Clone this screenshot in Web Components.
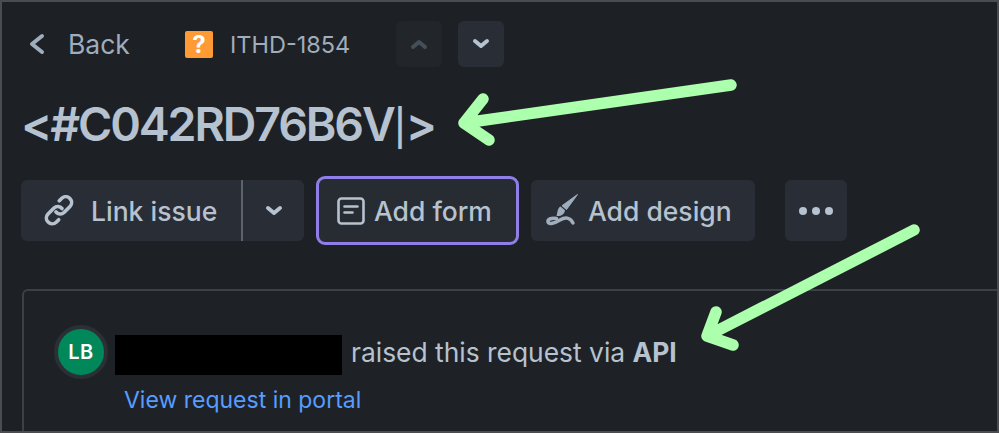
<!DOCTYPE html>
<html>
<head>
<meta charset="utf-8">
<style>
  html, body { margin: 0; padding: 0; background: #1d2125; }
</style>
</head>
<body>
<issue-screen>
  <issue-nav></issue-nav>
  <issue-title>&lt;#C042RD76B6V<span>|</span>&gt;</issue-title>
  <issue-actions></issue-actions>
  <request-card></request-card>
</issue-screen>

<script>
/* Outer screen frame, the annotation arrows lie over it */
class IssueScreen extends HTMLElement {
  constructor() {
    super();
    this.attachShadow({ mode: 'open' });
    this.shadowRoot.innerHTML = `
      <style>
        :host {
          display: block;
          position: relative;
          width: 999px;
          height: 433px;
          box-sizing: border-box;
          overflow: hidden;
          background: #1d2125;
          border: 2px solid #4b4c4f;
          font-family: Inter, "Liberation Sans", sans-serif;
          color: #b6c2cf;
        }
        .arrows { position: absolute; left: -2px; top: -2px; pointer-events: none; }
      </style>
      <slot></slot>
      <svg class="arrows" width="999" height="433" fill="none" stroke="#acffac" stroke-width="11.500" stroke-linecap="round" stroke-linejoin="round">
        <path d="M731 85L464 123M483 99L464 123L489 140"/>
        <path d="M914 230L707 336M716 312L707 336L733 345"/>
      </svg>
    `;
  }
}

class IssueNav extends HTMLElement {
  constructor() {
    super();
    this.attachShadow({ mode: 'open' });
    this.shadowRoot.innerHTML = `
      <style>
        :host { display: flex; align-items: center; height: 46px; margin-top: 19px; padding-left: 26px; }
        .back { display: flex; align-items: center; gap: 23px; font-size: 26.500px; color: #9fadbc; width: 157px; }
        .back svg { display: block; }
        .type {
          width: 28px; height: 27px; border-radius: 2px; background: #ff9a35; color: #fff;
          font: 700 24px/27px Inter, sans-serif; text-align: center;
        }
        .key { font-size: 23.500px; color: #9fadbc; margin-left: 17px; width: 166px; }
        .step {
          display: flex; align-items: center; justify-content: center;
          width: 46px; height: 46px; border-radius: 6px; background: #292e36;
        }
        .step.off { background: #22262b; margin-right: 16px; }
      </style>
      <div class="back">
        <svg width="17" height="24" viewBox="0 0 17 24" fill="none" stroke="#9fadbc" stroke-width="4" stroke-linecap="round" stroke-linejoin="round"><path d="M14 4L4 12l10 8"/></svg>
        <span>Back</span>
      </div>
      <div class="type">?</div>
      <div class="key">ITHD-1854</div>
      <div class="step off">
        <svg width="18" height="12" viewBox="0 0 18 12" fill="none" stroke="#454f59" stroke-width="4" stroke-linecap="round" stroke-linejoin="round"><path d="M3 9l6-5 6 5"/></svg>
      </div>
      <div class="step">
        <svg width="18" height="12" viewBox="0 0 18 12" fill="none" stroke="#b6c2cf" stroke-width="4" stroke-linecap="round" stroke-linejoin="round"><path d="M3 3l6 5 6-5"/></svg>
      </div>
    `;
  }
}

class IssueTitle extends HTMLElement {
  constructor() {
    super();
    this.attachShadow({ mode: 'open' });
    this.shadowRoot.innerHTML = `
      <style>
        :host {
          display: block; margin: 29px 0 0 19px; height: 56px;
          font-size: 46.500px; line-height: 56px; font-weight: 600; color: #b6c2cf;
          letter-spacing: -2.100px; white-space: nowrap;
        }
        ::slotted(span) { font-size: 36px; font-weight: 500; letter-spacing: -.5px; }
      </style>
      <slot></slot>
    `;
  }
}

class ActionButton extends HTMLElement {
  constructor() {
    super();
    this.attachShadow({ mode: 'open' });
    this.shadowRoot.innerHTML = `
      <style>
        :host {
          display: flex; align-items: center; gap: var(--gap, 12px);
          justify-content: var(--justify, flex-start);
          box-sizing: border-box; height: 61px; padding: 0 0 0 var(--pad, 22px);
          background: #292e36; border-radius: 6px;
          font-size: 26.500px; font-weight: 500; color: #b6c2cf; white-space: nowrap;
        }
        :host([focused]) {
          height: 69px; width: 203px; padding: 0 0 0 18px;
          background: #272c33; border: 3.500px solid #8f7ee7; border-radius: 9px;
        }
        ::slotted(svg) { display: block; flex: none; }
      </style>
      <slot name="icon"></slot><slot></slot>
    `;
  }
}

class IssueActions extends HTMLElement {
  constructor() {
    super();
    this.attachShadow({ mode: 'open' });
    this.shadowRoot.innerHTML = `
      <style>
        :host { display: flex; align-items: center; gap: 12px; margin: 24px 0 0 19px; height: 69px; }
        .link { width: 220px; border-radius: 6px 0 0 6px; --gap: 15px; --pad: 21px; }
        .chev { width: 63px; border-radius: 0 6px 6px 0; border-left: 2px solid #5b636b; --pad: 0px; --justify: center; }
        .split { display: flex; }
        .form { --gap: 9px; }
        .design { width: 224px; --gap: 9px; --pad: 14px; }
        .more { width: 62px; --pad: 0px; --justify: center; margin-left: 18px; }
        .more i { width: 8px; height: 8px; border-radius: 50%; background: #b6c2cf; display: block; }
        .dots { display: flex; gap: 5px; }
      </style>
      <div class="split">
        <action-button class="link">
          <svg slot="icon" width="34" height="31" viewBox="0 0 34 31" fill="none" stroke="#b6c2cf" stroke-width="3.600" stroke-linecap="round" stroke-linejoin="round">
            <path d="M14 17a5.500 5.500 0 0 0 8 .5l6-6a5.800 5.800 0 0 0-8.200-8.200l-2.500 2.500"/>
            <path d="M20 13.500a5.500 5.500 0 0 0-8-.5l-6 6a5.800 5.800 0 0 0 8.200 8.200l2.500-2.500"/>
          </svg>
          Link issue
        </action-button>
        <action-button class="chev">
          <svg slot="icon" width="18" height="12" viewBox="0 0 18 12" fill="none" stroke="#b6c2cf" stroke-width="4" stroke-linecap="round" stroke-linejoin="round"><path d="M3 3l6 5 6-5"/></svg>
        </action-button>
      </div>
      <action-button class="form" focused>
        <svg slot="icon" width="28" height="28" viewBox="0 0 28 28" fill="none" stroke="#b6c2cf" stroke-width="2.600" stroke-linecap="round" stroke-linejoin="round">
          <rect x="1.500" y="1.500" width="25" height="25" rx="3"/>
          <path d="M7.500 9.500h13M7.500 15.500h8"/>
        </svg>
        Add form
      </action-button>
      <action-button class="design">
        <svg slot="icon" width="34" height="33" viewBox="0 0 34 33" fill="none">
          <path d="M32.500 .5L21.500 15.500l-4.500-3.800z" fill="#9fadbc" stroke="#9fadbc" stroke-linejoin="round"/>
          <path d="M15.500 12.500l4.500 3.800c-.5 4-4 6.200-8.500 5.700 1.200-3 .5-7.500 4-9.500z" fill="#9fadbc"/>
          <path d="M11.500 24.500C7 23.500 2.500 25 3 28c.5 3 7 1 12-2s10-3 13 3" stroke="#9fadbc" stroke-width="3.500" stroke-linecap="round"/>
        </svg>
        Add design
      </action-button>
      <action-button class="more">
        <span class="dots" slot="icon"><i></i><i></i><i></i></span>
      </action-button>
    `;
  }
}

class RequestCard extends HTMLElement {
  constructor() {
    super();
    this.attachShadow({ mode: 'open' });
    this.shadowRoot.innerHTML = `
      <style>
        :host {
          display: block; margin: 44px -20px 0 20px; height: 200px; box-sizing: border-box;
          border: 2px solid #3a4149; border-radius: 6px; padding: 34px 0 0 30px;
          background: #1e2227; font-size: 26.400px;
        }
        .row { display: flex; align-items: center; height: 54px; }
        .avatar {
          width: 46px; height: 46px; border-radius: 50%; background: #00875a; flex: none;
          border: 4px solid #2a3036; color: #fff; font-size: 20px; font-weight: 600;
          display: flex; align-items: center; justify-content: center; letter-spacing: .5px;
        }
        .redacted { align-self: flex-start; width: 227px; height: 40px; background: #000; margin: 10px 9px 0 7px; flex: none; }
        .text { white-space: nowrap; }
        b { font-weight: 700; }
        a { display: block; margin: 6px 0 0 70px; font-size: 23px; line-height: 30px; color: #579dff; text-decoration: none; }
      </style>
      <div class="row">
        <div class="avatar">LB</div>
        <div class="redacted"></div>
        <div class="text">raised this request via <b>API</b></div>
      </div>
      <a href="#">View request in portal</a>
    `;
  }
}

customElements.define('issue-screen', IssueScreen);
customElements.define('issue-nav', IssueNav);
customElements.define('issue-title', IssueTitle);
customElements.define('action-button', ActionButton);
customElements.define('issue-actions', IssueActions);
customElements.define('request-card', RequestCard);
</script>
</body>
</html>
